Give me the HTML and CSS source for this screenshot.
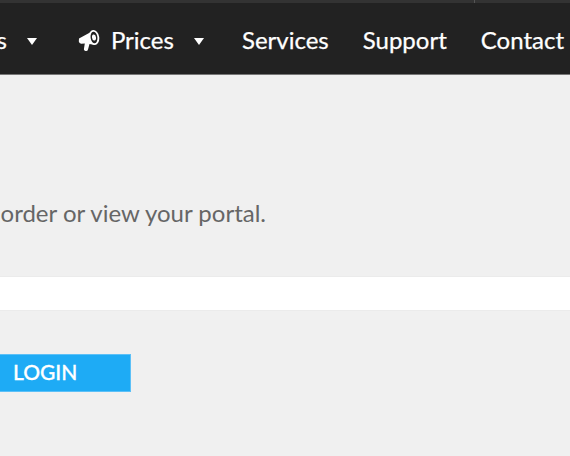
FILE: index.html
```html
<!DOCTYPE html>
<html lang="en">
<head>
<meta charset="utf-8">
<title>Login</title>
<link rel="stylesheet" href="styles.css">
</head>
<body>
<div class="topbar"><span class="topbar-divider"></span></div>
<nav class="nav">
  <span class="nav-item">Products<span class="caret"></span></span>
  <span class="nav-item prices">
    <svg class="horn" viewBox="0 0 22 24" width="22" height="24" aria-hidden="true">
      <path fill="#fff" d="M1 10.5 L12 4.5 Q13.5 10 17 17 L11.5 16 L10 21.5 Q9.5 23.5 7.5 23 L6.5 22.6 Q5.6 22 6 20.5 L6.8 15.6 L3.2 15.8 Q1.2 15.5 .8 13.5 Z"/>
      <ellipse cx="16" cy="9.5" rx="5.2" ry="7.6" transform="rotate(-8 16 9.5)" fill="#fff"/>
      <ellipse cx="16" cy="9.5" rx="3.4" ry="5.8" transform="rotate(-8 16 9.5)" fill="#222"/>
      <ellipse cx="16" cy="9.5" rx="2" ry="3" transform="rotate(-8 16 9.5)" fill="#fff"/>
    </svg>
    Prices<span class="caret"></span>
  </span>
  <span class="nav-item">Services</span>
  <span class="nav-item">Support</span>
  <span class="nav-item">Contact</span>
</nav>
<main class="content">
  <p class="lead">Please login to place an order or view your portal.</p>
  <div class="field"></div>
  <button class="login" type="button">LOGIN</button>
</main>
</body>
</html>
```
FILE: styles.css
```css
html, body { margin: 0; padding: 0; }
body {
  width: 570px;
  height: 456px;
  overflow: hidden;
  background: #f0f0f0;
  font-family: Lato, "Open Sans", sans-serif;
}
.topbar {
  height: 3px;
  background: #333;
  display: flex;
  justify-content: flex-end;
  padding-right: 95px;
}
.topbar-divider { width: 1px; background: #555; }
.nav {
  height: 72px;
  background: #222;
  border-bottom: 1px solid #777;
  box-sizing: border-box;
  display: flex;
  align-items: center;
  justify-content: flex-end;
  gap: 34px;
  color: #fff;
  font-size: 24px;
  -webkit-text-stroke: 0.25px #fff;
  white-space: nowrap;
  margin-right: -44px;
  padding-right: 50px;
  padding-top: 2px;
}
.nav-item { display: flex; align-items: center; }
.horn { margin-right: 11px; }
.prices { margin-right: 4px; margin-left: 7px; }
.caret {
  width: 0;
  height: 0;
  margin-left: 20px;
  margin-top: 3px;
  border-left: 5px solid transparent;
  border-right: 5px solid transparent;
  border-top: 7px solid #fff;
}
.content { width: 570px; display: flex; flex-direction: column; align-items: flex-end; }
.lead {
  margin: 125px 304px 0 0;
  font-size: 24px;
  line-height: 26px;
  color: #666;
  white-space: nowrap;
}
.field {
  margin-top: 50px;
  width: 570px;
  height: 35px;
  box-sizing: border-box;
  background: #fff;
  border-top: 1px solid #ebebeb;
  border-bottom: 1px solid #ebebeb;
}
.login {
  margin: 43px 439px 0 0;
  width: 201px;
  height: 38px;
  border: 1px solid #5cc0f7;
  background: #1eabf5;
  color: #fff;
  font: 500 21px Lato, sans-serif;
  -webkit-text-stroke: 0.3px #fff;
  text-align: left;
  padding: 0 0 4px 82px;
}
```
